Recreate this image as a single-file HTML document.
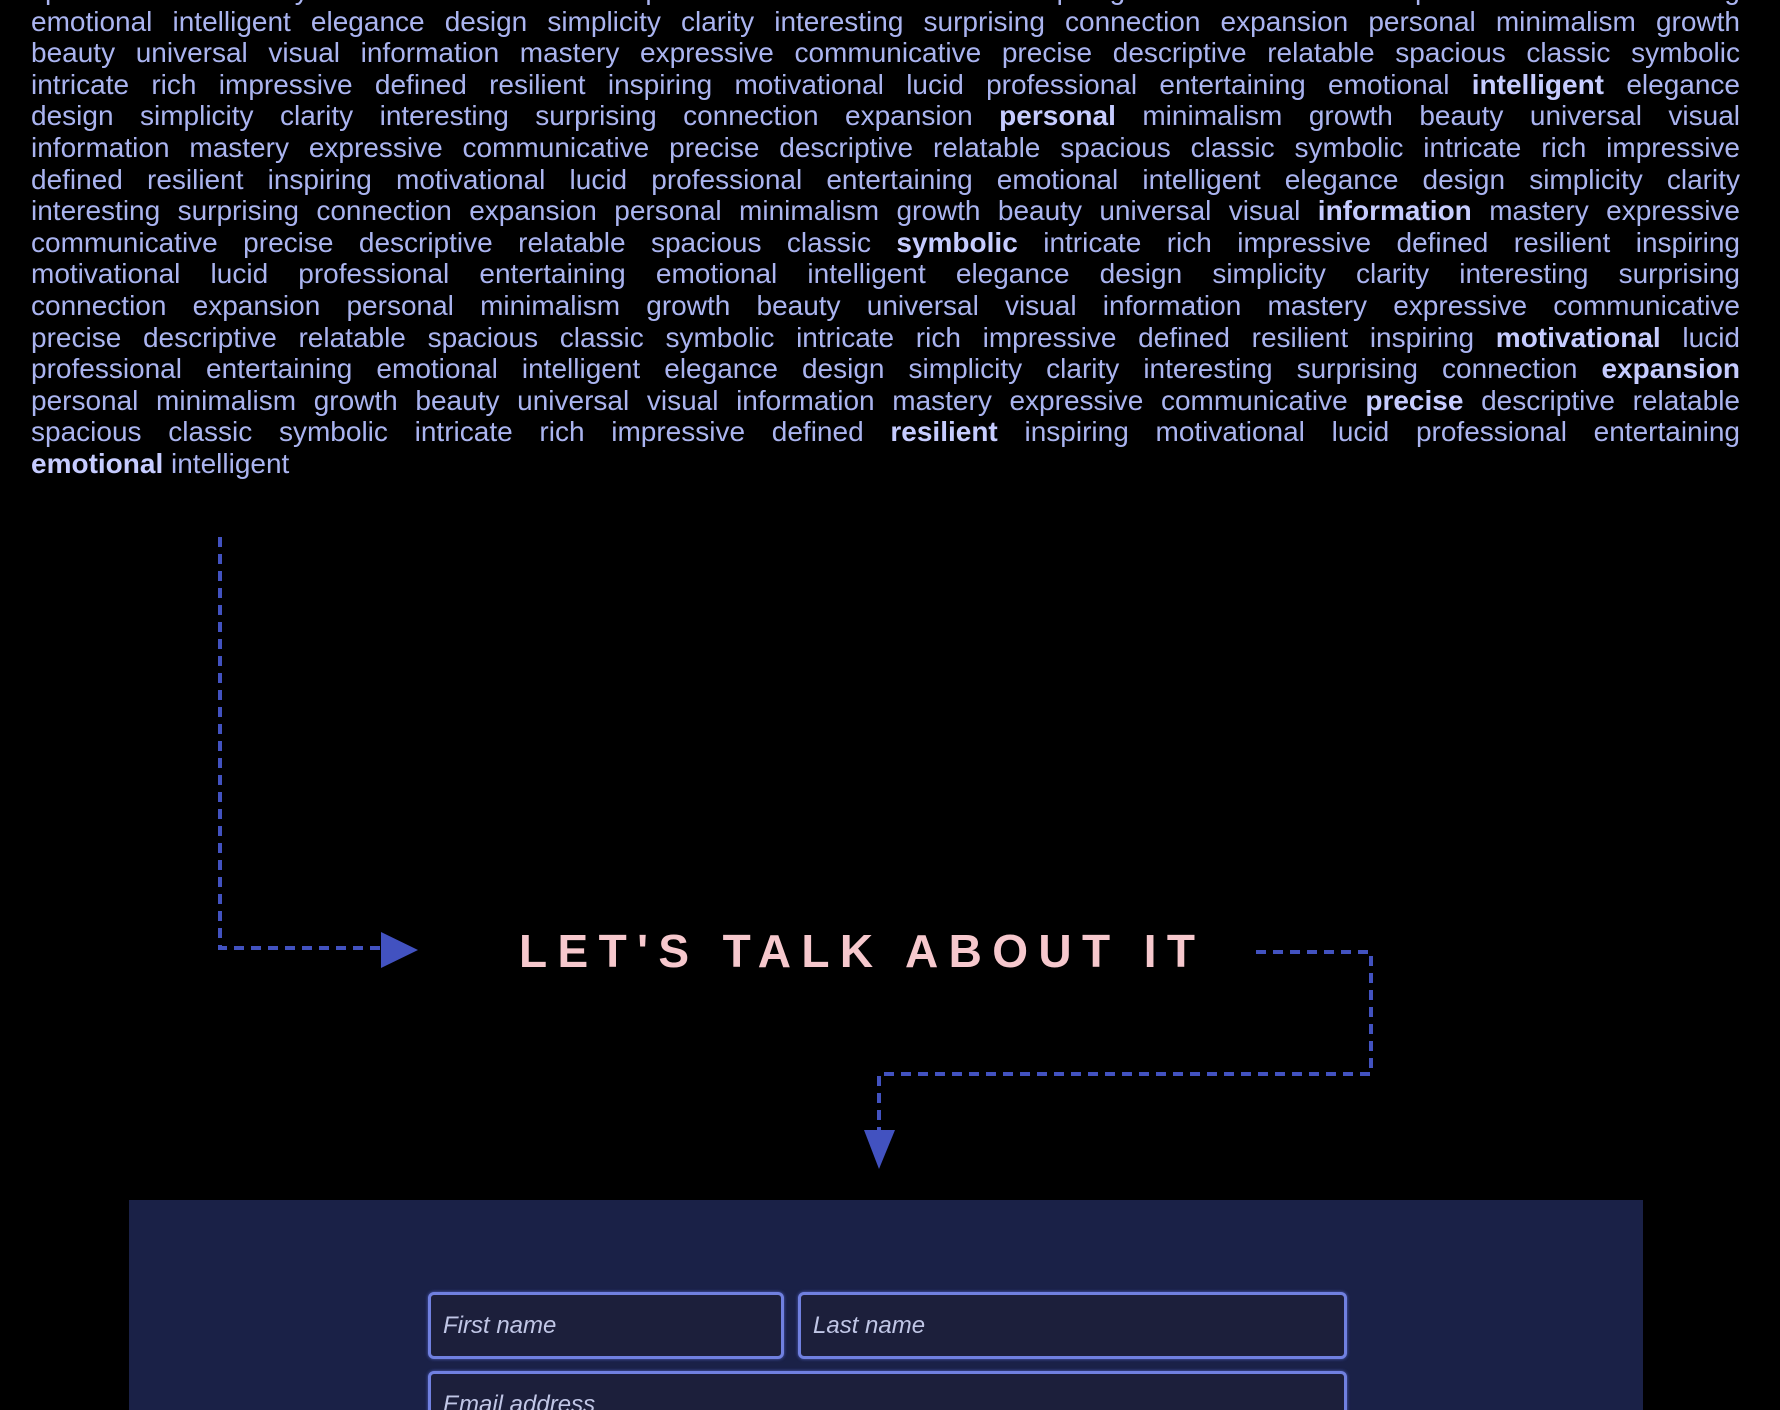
<!DOCTYPE html>
<html><head><meta charset="utf-8">
<style>
html,body{margin:0;padding:0;background:#000;width:1780px;height:1410px;overflow:hidden;}
body{position:relative;font-family:"Liberation Sans",sans-serif;}
.txt{position:absolute;left:31px;width:1709px;top:-26px;color:#aab4f0;font-size:28px;line-height:31.6px;}
.txt div{text-align:justify;text-align-last:justify;white-space:nowrap;}
.txt div.last{text-align-last:left;}
.txt b{color:#c6ccff;}
h1{position:absolute;left:519px;top:918px;margin:0;font-size:46px;font-weight:bold;letter-spacing:10.4px;color:#f6c8cd;line-height:66px;white-space:nowrap;}
svg{position:absolute;left:0;top:0;}
.wrap{position:absolute;left:0;top:0;width:1780px;height:1410px;overflow:hidden;}
.panel{position:absolute;left:129px;top:1200px;width:1514px;height:210px;background:#1a2147;}
.in{position:absolute;box-sizing:border-box;border:3px solid #7080e0;border-radius:6px;background:#1c1f3b;color:#c0c6e6;font-style:italic;font-size:24px;padding-left:12px;line-height:62px;box-shadow:0 0 3px #5060c0;}
</style></head><body><div class="wrap">
<div class="txt">
<div>spacious classic symbolic intricate rich impressive defined resilient inspiring motivational lucid professional entertaining</div>
<div>emotional intelligent elegance design simplicity clarity interesting surprising connection expansion personal minimalism growth</div>
<div>beauty universal visual information mastery expressive communicative precise descriptive relatable spacious classic symbolic</div>
<div>intricate rich impressive defined resilient inspiring motivational lucid professional entertaining emotional <b>intelligent</b> elegance</div>
<div>design simplicity clarity interesting surprising connection expansion <b>personal</b> minimalism growth beauty universal visual</div>
<div>information mastery expressive communicative precise descriptive relatable spacious classic symbolic intricate rich impressive</div>
<div>defined resilient inspiring motivational lucid professional entertaining emotional intelligent elegance design simplicity clarity</div>
<div>interesting surprising connection expansion personal minimalism growth beauty universal visual <b>information</b> mastery expressive</div>
<div>communicative precise descriptive relatable spacious classic <b>symbolic</b> intricate rich impressive defined resilient inspiring</div>
<div>motivational lucid professional entertaining emotional intelligent elegance design simplicity clarity interesting surprising</div>
<div>connection expansion personal minimalism growth beauty universal visual information mastery expressive communicative</div>
<div>precise descriptive relatable spacious classic symbolic intricate rich impressive defined resilient inspiring <b>motivational</b> lucid</div>
<div>professional entertaining emotional intelligent elegance design simplicity clarity interesting surprising connection <b>expansion</b></div>
<div>personal minimalism growth beauty universal visual information mastery expressive communicative <b>precise</b> descriptive relatable</div>
<div>spacious classic symbolic intricate rich impressive defined <b>resilient</b> inspiring motivational lucid professional entertaining</div>
<div class="last"><b>emotional</b> intelligent</div>
</div>
<svg width="1780" height="1410">
<g stroke="#4252c0" stroke-width="4" fill="none" stroke-dasharray="10 7">
<path d="M220 537 V948 H382"/>
<path d="M1256 952 H1371 V1074 H879 V1132"/>
</g>
<polygon points="381,932 418,950 381,968" fill="#4252c0"/>
<polygon points="864,1130 895,1130 879,1169" fill="#4252c0"/>
</svg>
<h1>LET'S TALK ABOUT IT</h1>
<div class="panel"></div>
<div class="in" style="left:428px;top:1292px;width:356px;height:67px;">First name</div>
<div class="in" style="left:798px;top:1292px;width:549px;height:67px;">Last name</div>
<div class="in" style="left:428px;top:1371px;width:919px;height:67px;">Email address</div>
</div></body></html>
